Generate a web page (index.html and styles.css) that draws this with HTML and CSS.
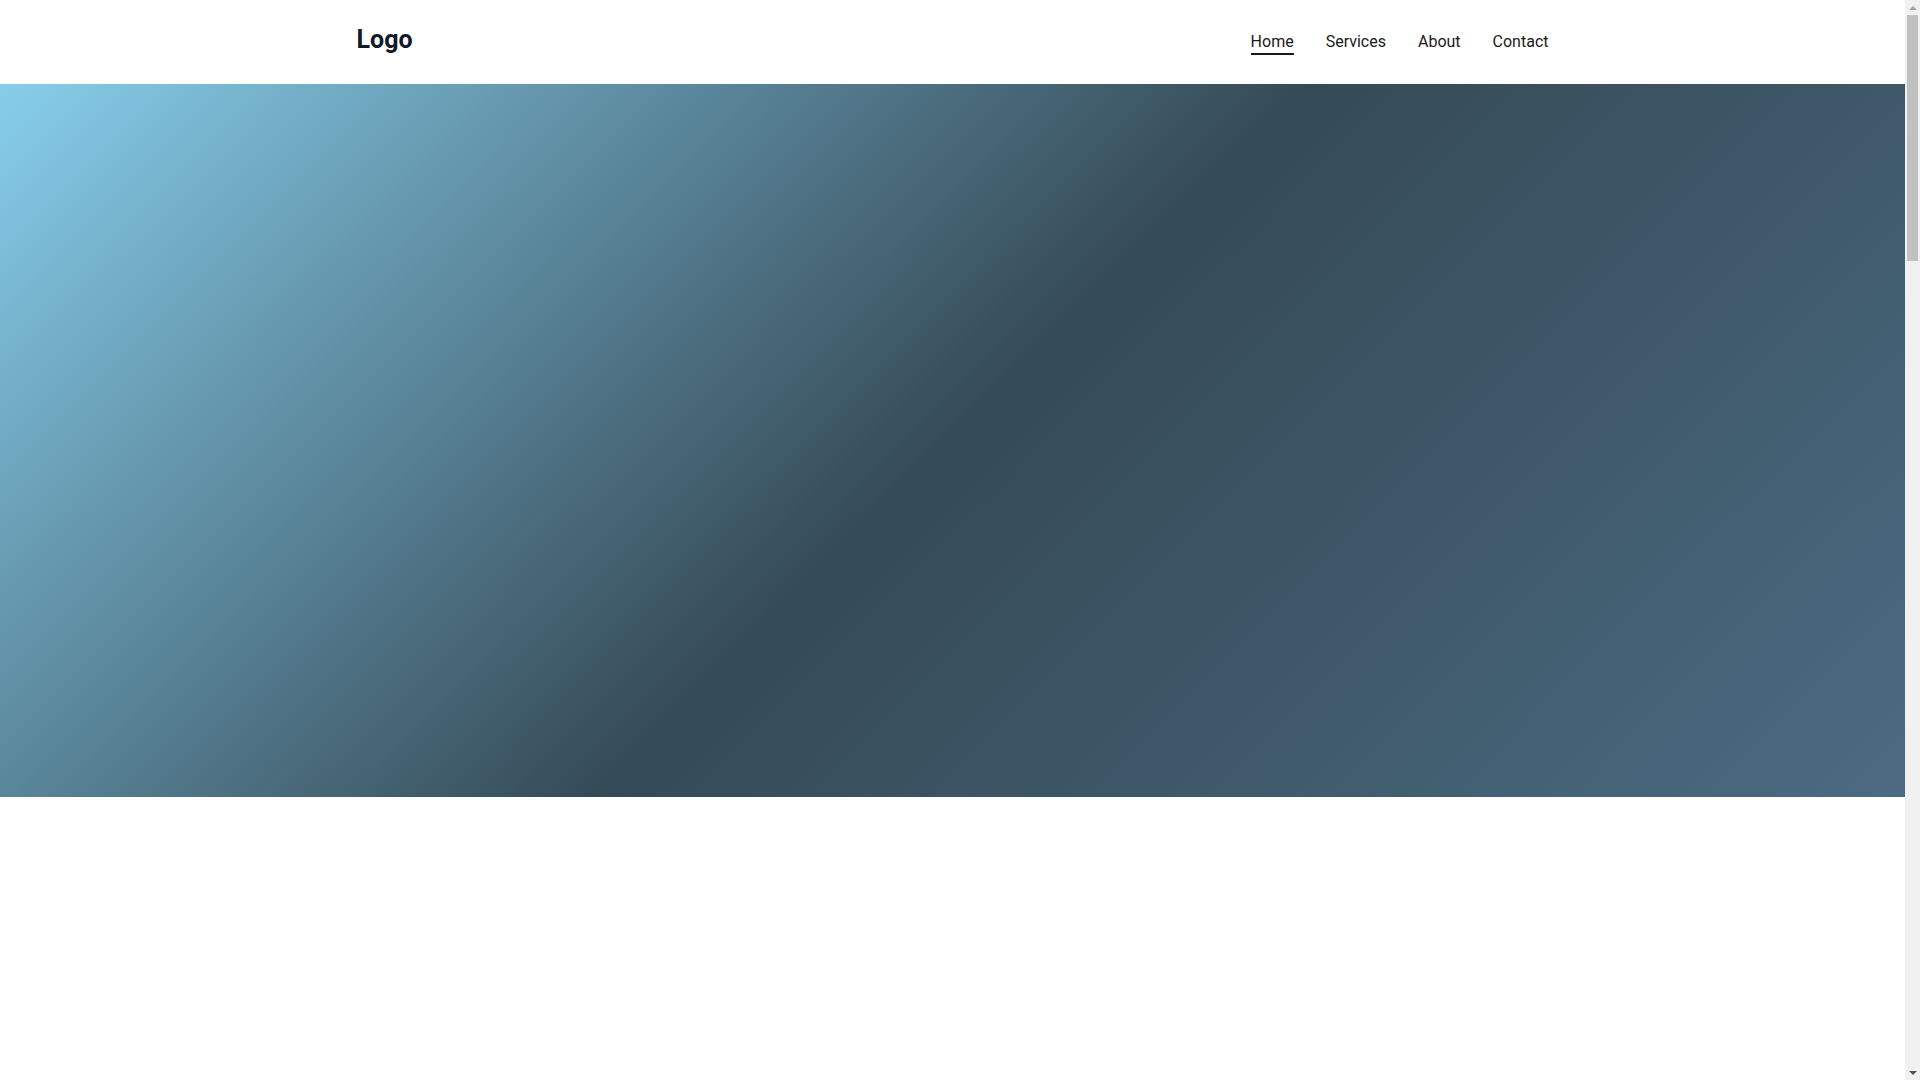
FILE: index.html
```html
<!DOCTYPE html>
<html lang="en">
<head>
<meta charset="utf-8">
<title>Logo</title>
<link rel="stylesheet" href="styles.css">
</head>
<body>
<div class="viewport">
  <div class="page">
    <header class="site-header">
      <div class="container header-inner">
        <a class="logo" href="#">Logo</a>
        <nav class="nav">
          <a class="nav-link active" href="#">Home</a>
          <a class="nav-link" href="#">Services</a>
          <a class="nav-link" href="#">About</a>
          <a class="nav-link" href="#">Contact</a>
        </nav>
      </div>
    </header>
    <main>
      <section class="hero"></section>
      <section class="content"></section>
    </main>
  </div>
  <div class="scrollbar" aria-hidden="true">
    <div class="sb-arrow sb-up"></div>
    <div class="sb-track">
      <div class="sb-thumb"></div>
    </div>
    <div class="sb-arrow sb-down"></div>
  </div>
</div>
</body>
</html>
```

FILE: styles.css
```css
html, body {
  margin: 0;
  padding: 0;
  height: 100%;
  overflow: hidden;
}
body {
  font-family: Roboto, "Liberation Sans", Arial, sans-serif;
  background: #ffffff;
  color: #1a1a1a;
}
.viewport {
  display: flex;
  height: 100vh;
}
.page {
  flex: 1;
  min-width: 0;
  overflow: hidden;
}
.container {
  box-sizing: border-box;
  max-width: 1200px;
  margin: 0 auto;
  padding: 0 4px;
}
.site-header {
  height: 84px;
  background: #ffffff;
}
.header-inner {
  height: 100%;
  display: flex;
  align-items: center;
  justify-content: space-between;
}
.logo {
  font-size: 25px;
  font-weight: 700;
  color: #111827;
  text-decoration: none;
  margin-top: -5px;
}
.nav {
  display: flex;
  align-items: center;
  gap: 32px;
}
.nav-link {
  font-size: 16px;
  color: #1a1a1a;
  text-decoration: none;
  padding-bottom: 2px;
  border-bottom: 2px solid transparent;
  margin-top: 2px;
}
.nav-link.active {
  border-bottom-color: #1a1a1a;
}
.hero {
  height: 713px;
  background: linear-gradient(135deg, #87ceeb 0%, #354a57 50%, #4b6b82 100%);
}
.content {
  height: 3800px;
}

/* scrollbar */
.scrollbar {
  width: 15px;
  flex: 0 0 15px;
  background: #f1f1f1;
  display: flex;
  flex-direction: column;
}
.sb-arrow {
  height: 15px;
  display: flex;
  align-items: center;
  justify-content: center;
}
.sb-arrow::before {
  content: "";
  width: 0;
  height: 0;
  border-left: 4px solid transparent;
  border-right: 4px solid transparent;
}
.sb-up::before {
  border-bottom: 4px solid #a3a3a3;
}
.sb-down::before {
  border-top: 4px solid #505050;
}
.sb-track {
  flex: 1;
  padding: 0 2px;
}
.sb-thumb {
  height: 246px;
  background: #c1c1c1;
}
```
